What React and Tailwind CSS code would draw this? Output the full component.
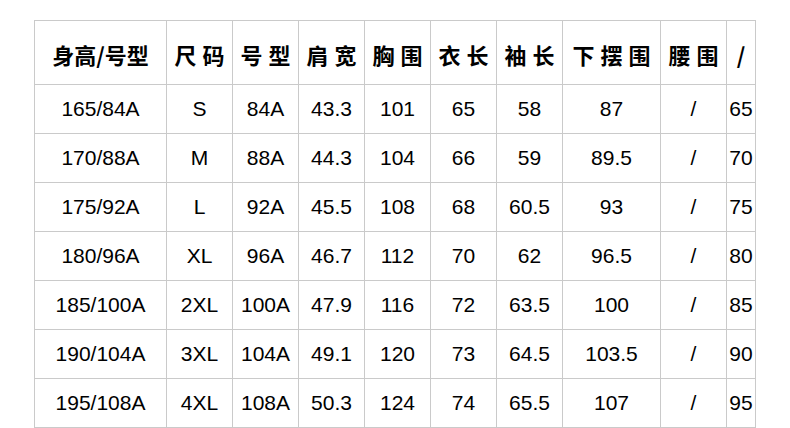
import React from "react";

const headers = ["身高/号型", "尺码", "号型", "肩宽", "胸围", "衣长", "袖长", "下摆围", "腰围", "/"];
const rows = [
  ["165/84A", "S", "84A", "43.3", "101", "65", "58", "87", "/", "65"],
  ["170/88A", "M", "88A", "44.3", "104", "66", "59", "89.5", "/", "70"],
  ["175/92A", "L", "92A", "45.5", "108", "68", "60.5", "93", "/", "75"],
  ["180/96A", "XL", "96A", "46.7", "112", "70", "62", "96.5", "/", "80"],
  ["185/100A", "2XL", "100A", "47.9", "116", "72", "63.5", "100", "/", "85"],
  ["190/104A", "3XL", "104A", "49.1", "120", "73", "64.5", "103.5", "/", "90"],
  ["195/108A", "4XL", "108A", "50.3", "124", "74", "65.5", "107", "/", "95"],
];

export default function App() {
  return (
    <div className="w-[790px] h-[428px] bg-white overflow-hidden">
      <div className="ml-[34px] mt-[20px] w-fit grid grid-cols-[131px_65px_65px_65px_65px_65px_65px_97px_65px_28px] grid-rows-[63px_repeat(7,48px)] gap-px p-px bg-[#cacaca]">
        {headers.map((h, i) => (
          <div
            key={"h" + i}
            className={
              "bg-white flex items-center justify-center pt-[4px] text-[22px] font-bold text-black whitespace-nowrap font-['Noto_Sans_CJK_SC','Noto_Sans',sans-serif] " +
              (i === 0 || i === 9 ? "tracking-normal" : "tracking-[6px] pl-[6px]")
            }
          >
            {h}
          </div>
        ))}
        {rows.map((r, ri) =>
          r.map((c, ci) => (
            <div
              key={ri + "-" + ci}
              className="bg-white flex items-center justify-center text-[21px] text-black whitespace-nowrap font-['Liberation_Sans',Arial,sans-serif]"
            >
              {c}
            </div>
          ))
        )}
      </div>
    </div>
  );
}
